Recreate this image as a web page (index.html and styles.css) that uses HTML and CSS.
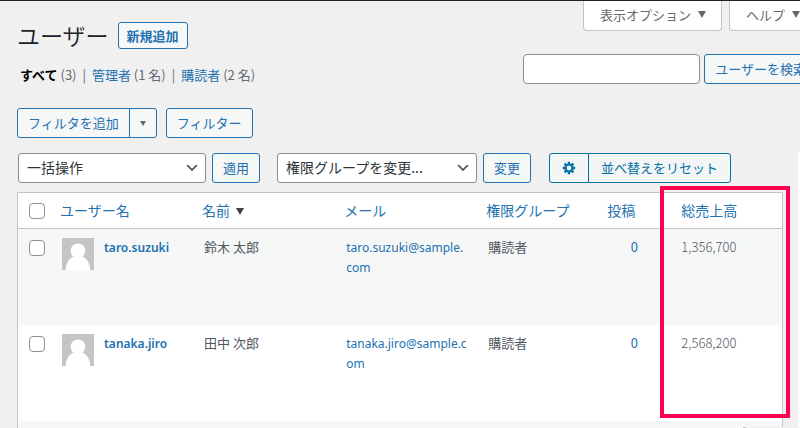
FILE: index.html
```html
<!DOCTYPE html>
<html lang="ja">
<head>
    <meta charset="UTF-8">
    <title>ユーザー</title>
    <link rel="stylesheet" href="styles.css">
</head>
<body>

<div class="screen-meta">
    <button type="button" class="meta-tab">表示オプション <span class="arrow"></span></button>
    <button type="button" class="meta-tab">ヘルプ <span class="arrow"></span></button>
</div>

<main class="wrap">
    <div class="heading">
        <h1>ユーザー</h1>
        <a href="#" class="page-action">新規追加</a>
    </div>

    <div class="views-row">
        <ul class="views">
            <li><a href="#" class="current">すべて</a> (3) <span class="bar">|</span></li>
            <li><a href="#">管理者</a> (1 名) <span class="bar">|</span></li>
            <li><a href="#">購読者</a> (2 名)</li>
        </ul>
        <form class="search">
            <input type="search" name="s" aria-label="ユーザーを検索">
            <button type="submit" class="button">ユーザーを検索</button>
        </form>
    </div>

    <div class="filters">
        <div class="group">
            <button type="button" class="button">フィルタを追加</button>
            <button type="button" class="button toggle" aria-label="フィルタ"><span class="arrow small"></span></button>
        </div>
        <button type="button" class="button">フィルター</button>
    </div>

    <div class="actions">
        <select class="bulk" aria-label="一括操作">
            <option>一括操作</option>
        </select>
        <button type="button" class="button">適用</button>
        <select class="role" aria-label="権限グループを変更">
            <option>権限グループを変更...</option>
        </select>
        <button type="button" class="button">変更</button>
        <div class="group sorting">
            <button type="button" class="button gear" aria-label="設定">
                <svg width="14" height="14" viewBox="0 0 14 14">
                    <path d="M7 2.9V.8M7 13.2v-2.1M2.9 7H.8M13.2 7h-2.1M4.1 4.1 2.6 2.6M11.4 11.4 9.9 9.9M4.1 9.9l-1.5 1.5M11.4 2.6 9.9 4.1" stroke="currentColor" stroke-width="2.4"/>
                    <circle cx="7" cy="7" r="3.5" fill="none" stroke="currentColor" stroke-width="2.2"/>
                </svg>
            </button>
            <button type="button" class="button">並べ替えをリセット</button>
        </div>
    </div>

    <div class="list">
        <table>
            <thead>
                <tr>
                    <th class="check"><input type="checkbox" aria-label="すべて選択"></th>
                    <th class="username"><a href="#">ユーザー名</a></th>
                    <th class="name"><a href="#">名前<span class="arrow"></span></a></th>
                    <th class="email"><a href="#">メール</a></th>
                    <th class="roles"><a href="#">権限グループ</a></th>
                    <th class="posts"><a href="#">投稿</a></th>
                    <th class="sales"><a href="#">総売上高</a></th>
                </tr>
            </thead>
            <tbody>
                <tr>
                    <td class="check"><input type="checkbox" aria-label="taro.suzuki を選択"></td>
                    <td>
                        <div class="user">
                            <svg class="avatar" viewBox="0 0 32 32">
                                <path fill="#c5c5c5" d="M0 0h32v32H0z"/>
                                <path fill="#fff" d="M16 5.500c4.300 0 7.300 3.200 7.300 7.200 0 2.600-1.200 4.700-2.900 5.900C25.200 20.300 28 25.500 28.200 32H3.800c.2-6.500 3-11.700 7.800-13.400-1.700-1.200-2.900-3.300-2.900-5.900 0-4 3-7.200 7.300-7.200z"/>
                            </svg>
                            <a href="#" class="login">taro.suzuki</a>
                        </div>
                    </td>
                    <td>鈴木 太郎</td>
                    <td class="mail"><a href="#">taro.suzuki@sample.<br>com</a></td>
                    <td>購読者</td>
                    <td class="posts"><a href="#">0</a></td>
                    <td class="amount">1,356,700</td>
                </tr>
                <tr>
                    <td class="check"><input type="checkbox" aria-label="tanaka.jiro を選択"></td>
                    <td>
                        <div class="user">
                            <svg class="avatar" viewBox="0 0 32 32">
                                <path fill="#c5c5c5" d="M0 0h32v32H0z"/>
                                <path fill="#fff" d="M16 5.500c4.300 0 7.300 3.200 7.300 7.200 0 2.600-1.200 4.700-2.900 5.900C25.200 20.300 28 25.500 28.200 32H3.800c.2-6.500 3-11.700 7.800-13.400-1.700-1.200-2.900-3.300-2.900-5.900 0-4 3-7.200 7.300-7.200z"/>
                            </svg>
                            <a href="#" class="login">tanaka.jiro</a>
                        </div>
                    </td>
                    <td>田中 次郎</td>
                    <td class="mail"><a href="#">tanaka.jiro@sample.com</a></td>
                    <td>購読者</td>
                    <td class="posts"><a href="#">0</a></td>
                    <td class="amount">2,568,200</td>
                </tr>
                <tr>
                    <td colspan="7" class="next"></td>
                </tr>
            </tbody>
        </table>
        <div class="highlight"></div>
    </div>
</main>
<div class="side-edge"></div>
<div class="bottom-edge"></div>

</body>
</html>
```

FILE: styles.css
```css
* {
    box-sizing: border-box;
}

html {
    height: 100%;
    overflow: hidden;
}

body {
    position: relative;
    margin: 0;
    height: 100%;
    overflow: hidden;
    border-top: 1px solid #1d2327;
    background: #f0f0f1;
    color: #50575e;
    font-family: "Noto Sans CJK JP", sans-serif;
    font-size: 13px;
    line-height: 20px;
}

a {
    color: #2271b1;
    text-decoration: none;
}

button, input, select {
    margin: 0;
    font: inherit;
}

.screen-meta {
    display: flex;
    justify-content: flex-end;
    gap: 7px;
    height: 30px;
    margin-right: -16px;
}

.meta-tab {
    display: flex;
    align-items: center;
    gap: 7px;
    padding: 0 15px 2px 16px;
    border: 1px solid #c3c4c7;
    border-top: 0;
    border-radius: 0 0 4px 4px;
    background: #fff;
    color: #646970;
    white-space: nowrap;
}

.arrow {
    display: inline-block;
    border: 4px solid transparent;
    border-top: 7px solid currentColor;
    border-bottom: 0;
}

.arrow.small {
    border-width: 5px 3px 0;
    color: #646970;
}

.wrap {
    padding: 0 17px;
}

.heading {
    display: flex;
    align-items: center;
    gap: 9px;
    height: 28px;
    margin-top: -10px;
}

h1 {
    margin: 0;
    color: #1d2327;
    font-size: 23px;
    font-weight: 350;
    line-height: 28px;
}

.page-action {
    height: 27px;
    padding: 0 8px;
    border: 1px solid #2271b1;
    border-radius: 3px;
    background: #f6f7f7;
    font-weight: 600;
    line-height: 25px;
}

.views-row {
    display: flex;
    justify-content: space-between;
    margin: 5px -34px 0 0;
}

.views {
    display: flex;
    gap: 6px;
    margin: 11px 0 0;
    padding: 0 0 0 3px;
    color: #646970;
    list-style: none;
    white-space: nowrap;
}

.views .current {
    color: #000;
    font-weight: 600;
}

.bar {
    margin-left: 3px;
}

.search {
    display: flex;
    gap: 4px;
}

.search input {
    width: 177px;
    height: 30px;
    border: 1px solid #8c8f94;
    border-radius: 4px;
    background: #fff;
}

.button {
    height: 30px;
    padding: 0 10px;
    border: 1px solid #2271b1;
    border-radius: 3px;
    background: #f6f7f7;
    color: #2271b1;
    line-height: 28px;
    white-space: nowrap;
}

.filters {
    display: flex;
    gap: 9px;
    margin-top: 23px;
}

.group {
    display: flex;
}

.group .button:first-child {
    border-radius: 3px 0 0 3px;
}

.group .button:last-child {
    margin-left: -1px;
    border-radius: 0 3px 3px 0;
}

.toggle {
    display: flex;
    align-items: center;
}

.actions {
    display: flex;
    gap: 6px;
    margin: 15px 0 9px 1px;
}

select {
    height: 30px;
    padding: 0 24px 2px 8px;
    border: 1px solid #8c8f94;
    border-radius: 3px;
    appearance: none;
    background: #fff url("data:image/svg+xml,%3Csvg xmlns='http://www.w3.org/2000/svg' viewBox='0 0 20 20'%3E%3Cpath d='M5 6l5 5 5-5 2 1-7 7-7-7 2-1z' fill='%23555'/%3E%3C/svg%3E") no-repeat right 5px center / 16px;
    color: #2c3338;
    font-size: 14px;
}

.bulk {
    width: 188px;
}

.role {
    width: 200px;
    margin-left: 11px;
}

.sorting {
    margin-left: 12px;
}

.sorting .button {
    padding: 0 12px;
    border-color: #0071a1;
    background: #f3f5f6;
    color: #0071a1;
}

.gear svg {
    display: block;
}

.list {
    position: relative;
}

table {
    width: 100%;
    border: 1px solid #c3c4c7;
    border-bottom: 0;
    border-spacing: 0;
    background: #fff;
    table-layout: fixed;
}

th {
    height: 36px;
    padding: 0 10px 2px;
    border-bottom: 1px solid #c3c4c7;
    font-size: 14px;
    font-weight: 400;
    text-align: left;
    white-space: nowrap;
}

th .arrow {
    margin: 0 0 1px 6px;
    color: #3c434a;
}

td {
    height: 96px;
    padding: 8px 8px 8px 12px;
    vertical-align: top;
}

tbody tr:nth-child(odd) {
    background: #f6f7f7;
}

.check {
    width: 32px;
    padding: 0 0 0 11px;
}

td.check {
    padding-top: 11px;
}

.check input {
    display: block;
    width: 16px;
    height: 16px;
    border: 1px solid #8c8f94;
    border-radius: 4px;
    appearance: none;
    background: #fff;
}

.username, .name, .email {
    width: 18.6%;
}

.roles {
    width: 121px;
}

.posts {
    width: 74px;
}

td.posts {
    padding: 8px 0;
    text-align: center;
}

.user {
    display: flex;
    gap: 10px;
}

.avatar {
    width: 32px;
    height: 32px;
    margin-top: 1px;
}

.login, .mail {
    font-family: "Noto Sans", sans-serif;
    font-size: 12px;
}

.login {
    margin-top: 1px;
    font-weight: 600;
}

.mail {
    padding-top: 9px;
    padding-right: 6px;
    word-break: break-all;
}

.amount {
    padding-left: 10px;
    font-weight: 300;
}

.next {
    height: 7px;
    padding: 0;
}

.highlight {
    position: absolute;
    top: -6px;
    right: -7px;
    width: 130px;
    height: 232px;
    border: 4px solid #ff004f;
}

/* edges of the neighbouring panels */
.side-edge {
    position: absolute;
    top: 152px;
    right: 0;
    bottom: 0;
    width: 2px;
    background: #fff;
}

.bottom-edge {
    position: absolute;
    right: 0;
    bottom: 0;
    width: 57px;
    height: 1px;
    border-left: 3px solid #c3c4c7;
    background: #f0f0f1;
}
```
